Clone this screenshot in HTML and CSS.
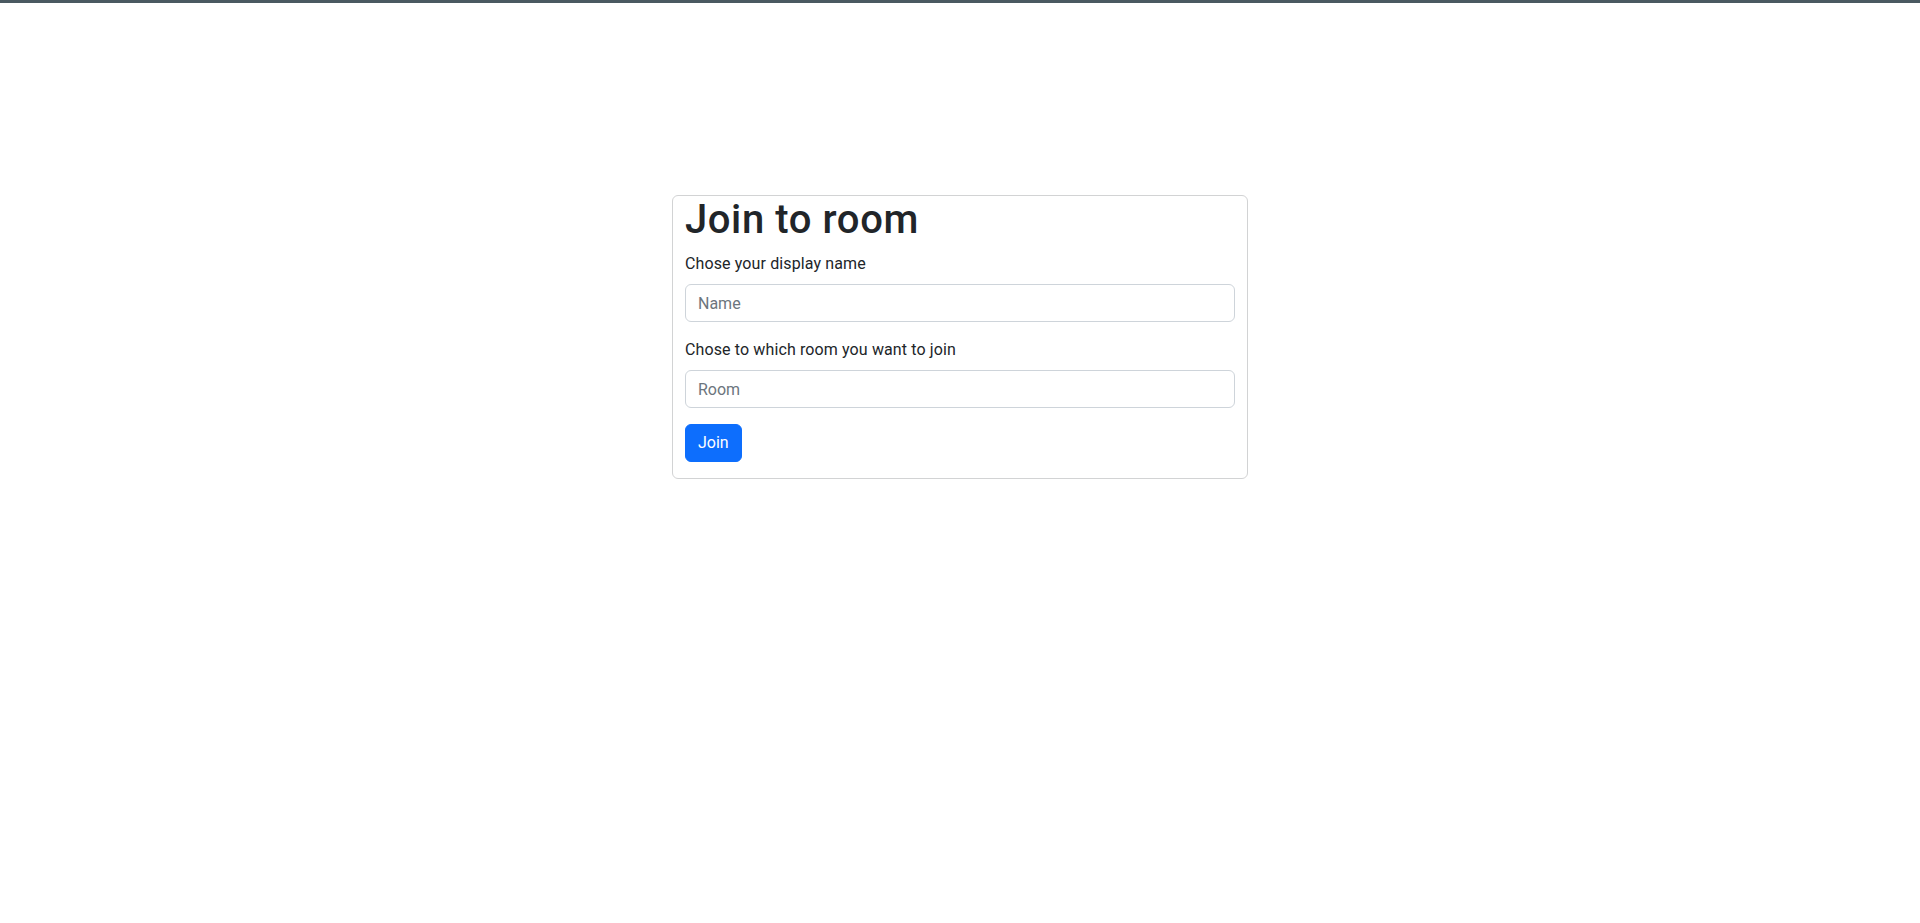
FILE: index.html
```html
<!DOCTYPE html>
<html lang="en">
<head>
<meta charset="utf-8">
<title>Join to room</title>
<link rel="stylesheet" href="styles.css">
</head>
<body>
<div class="topbar"></div>
<main class="card">
  <h1 class="title">Join to room</h1>
  <form class="form">
    <label class="form-label" for="name">Chose your display name</label>
    <input class="form-control" id="name" type="text" placeholder="Name">
    <label class="form-label" for="room">Chose to which room you want to join</label>
    <input class="form-control" id="room" type="text" placeholder="Room">
    <button class="btn" type="button">Join</button>
  </form>
</main>
</body>
</html>
```

FILE: styles.css
```css
* { box-sizing: border-box; }
html, body { margin: 0; padding: 0; background: #fff; }
body {
  font-family: Roboto, "Noto Sans", "Liberation Sans", sans-serif;
  font-size: 16px;
  line-height: 1.5;
  color: #212529;
  letter-spacing: 0.12px;
}
.topbar {
  height: 3px;
  background: #4a5961;
}
.card {
  width: 30%;
  margin: 192px auto 0;
  border: 1px solid #d2d3d4;
  border-radius: 6px;
  padding: 0 12px 16px;
}
.title {
  margin: 0 0 8px;
  font-size: 40px;
  line-height: 48px;
  font-weight: 500;
  color: #212529;
  letter-spacing: 0.6px;
}
.form { display: flex; flex-direction: column; align-items: flex-start; }
.form-label {
  display: block;
  margin-bottom: 8px;
  line-height: 24px;
}
.form-control {
  display: block;
  width: 100%;
  height: 38px;
  padding: 6px 12px;
  font: inherit;
  font-size: 16px;
  color: #212529;
  background: #fff;
  border: 1px solid #ced4da;
  border-radius: 6px;
  margin-bottom: 16px;
  outline: none;
}
.form-control::placeholder { color: #6c757d; opacity: 1; }
.btn {
  height: 38px;
  padding: 6px 12px;
  font: inherit;
  font-size: 16px;
  line-height: 24px;
  color: #fff;
  background: #0d6efd;
  border: 1px solid #0d6efd;
  border-radius: 6px;
  cursor: pointer;
}
```
